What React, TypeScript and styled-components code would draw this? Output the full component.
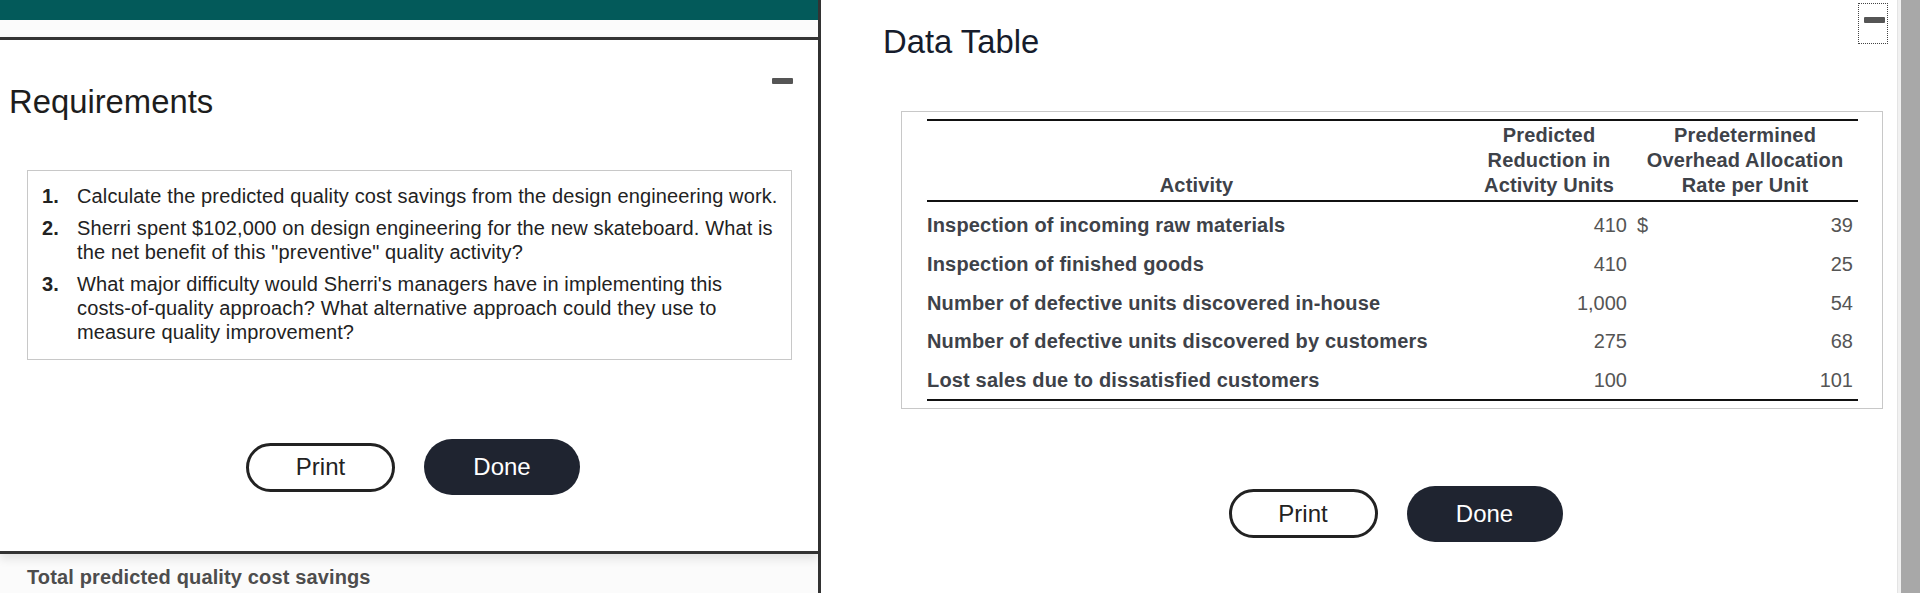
import styled, { createGlobalStyle } from 'styled-components';

const GlobalStyle = createGlobalStyle`
  html, body {
    margin: 0;
    padding: 0;
    background: #fff;
  }
  body {
    font-family: 'Liberation Sans', Arial, sans-serif;
  }
  * {
    box-sizing: border-box;
  }
`;

const Page = styled.div`
  display: flex;
  width: 1920px;
  height: 593px;
  overflow: hidden;
  background: #fff;
`;

const LeftPane = styled.section`
  flex: 0 0 821px;
  display: flex;
  flex-direction: column;
  border-right: 3px solid #333;
  background: #fbfbfb;
`;

const TealBar = styled.div`
  height: 20px;
  background: #035a5a;
`;

const Dialog = styled.div`
  margin-top: 17px;
  height: 517px;
  display: flex;
  flex-direction: column;
  background: #fff;
  border-top: 3px solid #333;
  border-bottom: 3px solid #333;
  box-shadow: 0 5px 9px rgba(0, 0, 0, 0.1);
`;

const DialogHeader = styled.div`
  display: flex;
  justify-content: space-between;
  align-items: flex-start;
  padding: 36px 25px 0 9px;
`;

const Title = styled.h1<{ $color?: string; $top: number }>`
  margin: ${(p) => p.$top}px 0 0;
  font-size: 32.8px;
  line-height: 37px;
  font-weight: 400;
  color: ${(p) => p.$color || '#1d1d1d'};
`;

const MinimizeButton = styled.button<{ $focused?: boolean }>`
  display: flex;
  padding: 0;
  background: none;
  cursor: pointer;
  border: ${(p) => (p.$focused ? '1px dotted #444' : 'none')};
  ${(p) =>
    p.$focused
      ? `width: 30px; height: 41px; padding: 13px 0 0 5px; align-items: flex-start;`
      : `margin-top: 2px;`}
`;

const Dash = styled.span`
  display: block;
  width: 21px;
  height: 6px;
  border-radius: 1px;
  background: #555;
`;

const DialogBody = styled.div`
  padding: 0 26px 0 27px;
`;

const RequirementsBox = styled.div`
  margin-top: 50px;
  border: 1px solid #c8c8c8;
  padding: 13px 11px 15px 14px;
`;

const List = styled.ol`
  list-style: none;
  margin: 0;
  padding: 0;
  display: flex;
  flex-direction: column;
  gap: 8px;
`;

const Item = styled.li`
  display: flex;
  font-size: 20px;
  line-height: 24px;
  letter-spacing: 0.13px;
  color: #222;
`;

const ItemNum = styled.span`
  flex: 0 0 35px;
  font-weight: 700;
`;

const ButtonRow = styled.div<{ $top: number; $shift: number }>`
  display: flex;
  justify-content: center;
  align-items: center;
  gap: 29px;
  margin-top: ${(p) => p.$top}px;
  padding-left: ${(p) => p.$shift}px;
`;

const PrintButton = styled.button`
  width: 149px;
  height: 49px;
  border: 3px solid #222;
  border-radius: 25px;
  background: #fff;
  color: #222;
  font-family: 'Liberation Sans', Arial, sans-serif;
  font-size: 24px;
  cursor: pointer;
`;

const DoneButton = styled.button`
  width: 156px;
  height: 56px;
  border: none;
  border-radius: 28px;
  background: #1f2430;
  color: #fff;
  font-family: 'Liberation Sans', Arial, sans-serif;
  font-size: 24px;
  cursor: pointer;
`;

const PageFooter = styled.div`
  padding: 12px 0 0 27px;
  font-size: 20px;
  line-height: 23px;
  font-weight: 700;
  letter-spacing: 0.14px;
  color: #4d4d4d;
  white-space: nowrap;
`;

const RightPane = styled.section`
  flex: 1;
  display: flex;
  background: #fff;
`;

const RightContent = styled.div`
  flex: 1;
  display: flex;
  flex-direction: column;
  padding: 3px 0 0 62px;
`;

const RightHeader = styled.div`
  display: flex;
  justify-content: space-between;
  align-items: flex-start;
  padding-right: 9px;
`;

const TableBox = styled.div`
  margin: 51px 14px 0 18px;
  border: 1px solid #c8c8c8;
  padding: 7px 24px 7px 25px;
`;

const DataGrid = styled.table`
  width: 100%;
  table-layout: fixed;
  border-collapse: collapse;
  border-top: 2px solid #111;
  border-bottom: 2px solid #111;
  font-size: 20px;
`;

const HeadRow = styled.tr`
  border-bottom: 2px solid #111;
`;

const HeadCell = styled.th`
  padding: 2px 0;
  line-height: 25px;
  font-weight: 700;
  letter-spacing: 0.15px;
  color: #3e4249;
  text-align: center;
  vertical-align: bottom;
`;

const BodyRow = styled.tr`
  &:last-child td {
    padding-bottom: 5px;
  }
`;

const Cell = styled.td<{ $kind: 'label' | 'num' | 'sign' }>`
  padding: 11px ${(p) => (p.$kind === 'num' ? '5px' : '0')} 2px
    ${(p) => (p.$kind === 'sign' ? '5px' : '0')};
  line-height: 25.8px;
  white-space: nowrap;
  text-align: ${(p) => (p.$kind === 'num' ? 'right' : 'left')};
  font-weight: ${(p) => (p.$kind === 'label' ? 700 : 400)};
  letter-spacing: ${(p) => (p.$kind === 'label' ? '0.17px' : '0')};
  color: ${(p) => (p.$kind === 'label' ? '#3e4249' : '#555')};
`;

const Scrollbar = styled.div`
  flex: 0 0 23px;
  display: flex;
  background: #f1f1f1;
  border-left: 1px solid #e4e4e4;
  padding-left: 3px;
`;

const ScrollThumb = styled.div`
  flex: 1;
  background: #a8a8a8;
`;

const requirements = [
  'Calculate the predicted quality cost savings from the design engineering work.',
  'Sherri spent $102,000 on design engineering for the new skateboard. What is the net benefit of this "preventive" quality activity?',
  "What major difficulty would Sherri's managers have in implementing this costs-of-quality approach? What alternative approach could they use to measure quality improvement?",
];

const rows = [
  { activity: 'Inspection of incoming raw materials', units: '410', sign: '$', rate: '39' },
  { activity: 'Inspection of finished goods', units: '410', sign: '', rate: '25' },
  { activity: 'Number of defective units discovered in-house', units: '1,000', sign: '', rate: '54' },
  { activity: 'Number of defective units discovered by customers', units: '275', sign: '', rate: '68' },
  { activity: 'Lost sales due to dissatisfied customers', units: '100', sign: '', rate: '101' },
];

export default function App() {
  return (
    <>
      <GlobalStyle />
      <Page>
        <LeftPane>
          <TealBar />
          <Dialog>
            <DialogHeader>
              <Title $top={7}>Requirements</Title>
              <MinimizeButton aria-label="Minimize">
                <Dash />
              </MinimizeButton>
            </DialogHeader>
            <DialogBody>
              <RequirementsBox>
                <List>
                  {requirements.map((text, i) => (
                    <Item key={i}>
                      <ItemNum>{i + 1}.</ItemNum>
                      <span>{text}</span>
                    </Item>
                  ))}
                </List>
              </RequirementsBox>
              <ButtonRow $top={79} $shift={7}>
                <PrintButton>Print</PrintButton>
                <DoneButton>Done</DoneButton>
              </ButtonRow>
            </DialogBody>
          </Dialog>
          <PageFooter>Total predicted quality cost savings</PageFooter>
        </LeftPane>

        <RightPane>
          <RightContent>
            <RightHeader>
              <Title $color="#161c2c" $top={20}>
                Data Table
              </Title>
              <MinimizeButton $focused aria-label="Minimize">
                <Dash />
              </MinimizeButton>
            </RightHeader>
            <TableBox>
              <DataGrid>
                <colgroup>
                  <col style={{ width: 539 }} />
                  <col style={{ width: 166 }} />
                  <col style={{ width: 20 }} />
                  <col />
                </colgroup>
                <thead>
                  <HeadRow>
                    <HeadCell>Activity</HeadCell>
                    <HeadCell>
                      Predicted
                      <br />
                      Reduction in
                      <br />
                      Activity Units
                    </HeadCell>
                    <HeadCell colSpan={2}>
                      Predetermined
                      <br />
                      Overhead Allocation
                      <br />
                      Rate per Unit
                    </HeadCell>
                  </HeadRow>
                </thead>
                <tbody>
                  {rows.map((r) => (
                    <BodyRow key={r.activity}>
                      <Cell $kind="label">{r.activity}</Cell>
                      <Cell $kind="num">{r.units}</Cell>
                      <Cell $kind="sign">{r.sign}</Cell>
                      <Cell $kind="num">{r.rate}</Cell>
                    </BodyRow>
                  ))}
                </tbody>
              </DataGrid>
            </TableBox>
            <ButtonRow $top={77} $shift={11}>
              <PrintButton>Print</PrintButton>
              <DoneButton>Done</DoneButton>
            </ButtonRow>
          </RightContent>
          <Scrollbar>
            <ScrollThumb />
          </Scrollbar>
        </RightPane>
      </Page>
    </>
  );
}
